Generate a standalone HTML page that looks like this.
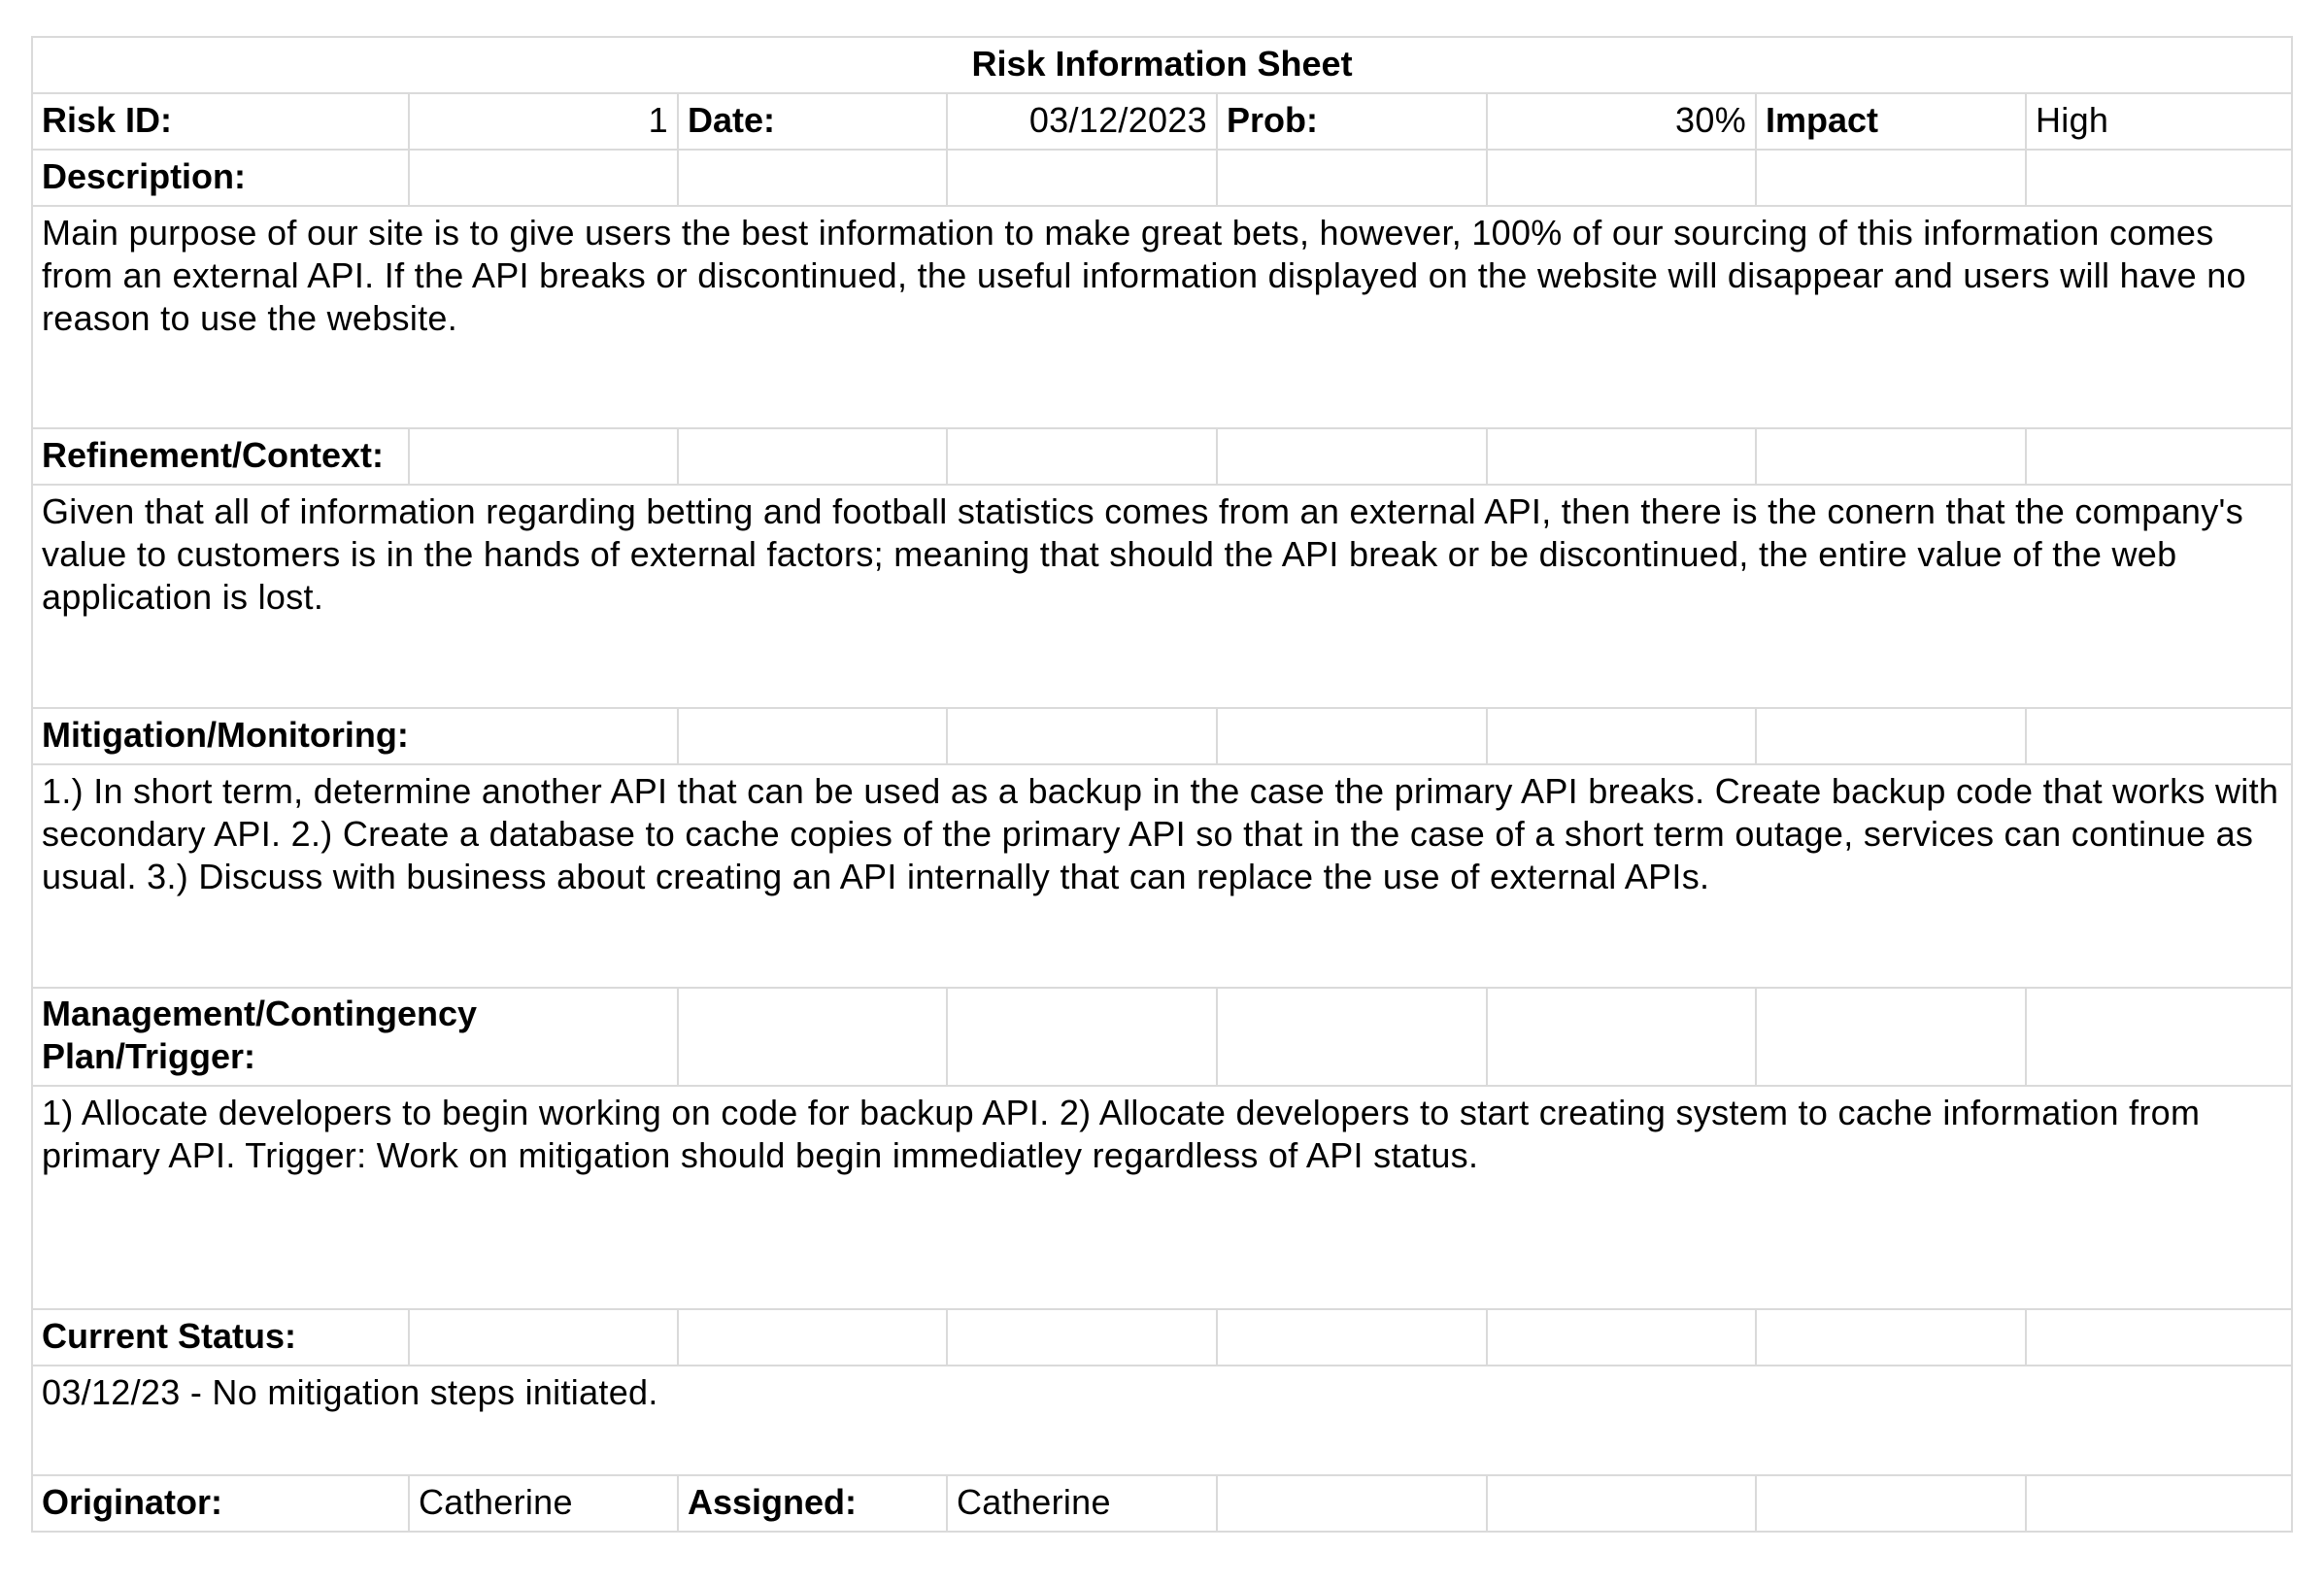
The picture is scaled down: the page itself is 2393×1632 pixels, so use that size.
<!DOCTYPE html>
<html><head><meta charset="utf-8"><style>
html,body{margin:0;padding:0;background:#fff;width:2393px;height:1632px;overflow:hidden}
table{position:absolute;left:32px;top:37px;width:2327px;border-collapse:collapse;table-layout:fixed;font-family:"Liberation Sans",Arial,sans-serif;font-size:36px;color:#000;letter-spacing:0.3px}
td{border:2px solid #dadada;padding:0 9px 7px 9px;line-height:44px;white-space:nowrap;overflow:visible;vertical-align:bottom}
td.b{font-weight:bold;letter-spacing:0}
td.r{text-align:right}
td.w{vertical-align:top;padding-top:5px;padding-bottom:0}
</style></head><body>
<table>
<colgroup><col style="width:388px"><col style="width:277px"><col style="width:277px"><col style="width:278px"><col style="width:278px"><col style="width:277px"><col style="width:278px"><col style="width:274px"></colgroup>
<tr style="height:58px"><td colspan="8" class="b" style="text-align:center">Risk Information Sheet</td></tr>
<tr style="height:58px"><td class="b">Risk ID:</td><td class="r">1</td><td class="b">Date:</td><td class="r">03/12/2023</td><td class="b">Prob:</td><td class="r">30%</td><td class="b">Impact</td><td>High</td></tr>
<tr style="height:58px"><td class="b">Description:</td><td></td><td></td><td></td><td></td><td></td><td></td><td></td></tr>
<tr style="height:229px"><td colspan="8" class="w">Main purpose of our site is to give users the best information to make great bets, however, 100% of our sourcing of this information comes<br>from an external API. If the API breaks or discontinued, the useful information displayed on the website will disappear and users will have no<br>reason to use the website.</td></tr>
<tr style="height:58px"><td class="b">Refinement/Context:</td><td></td><td></td><td></td><td></td><td></td><td></td><td></td></tr>
<tr style="height:230px"><td colspan="8" class="w">Given that all of information regarding betting and football statistics comes from an external API, then there is the conern that the company's<br>value to customers is in the hands of external factors; meaning that should the API break or be discontinued, the entire value of the web<br>application is lost.</td></tr>
<tr style="height:58px"><td colspan="2" class="b">Mitigation/Monitoring:</td><td></td><td></td><td></td><td></td><td></td><td></td></tr>
<tr style="height:230px"><td colspan="8" class="w">1.) In short term, determine another API that can be used as a backup in the case the primary API breaks. Create backup code that works with<br>secondary API. 2.) Create a database to cache copies of the primary API so that in the case of a short term outage, services can continue as<br>usual. 3.) Discuss with business about creating an API internally that can replace the use of external APIs.</td></tr>
<tr style="height:101px"><td colspan="2" class="b">Management/Contingency<br>Plan/Trigger:</td><td></td><td></td><td></td><td></td><td></td><td></td></tr>
<tr style="height:230px"><td colspan="8" class="w">1) Allocate developers to begin working on code for backup API. 2) Allocate developers to start creating system to cache information from<br>primary API. Trigger: Work on mitigation should begin immediatley regardless of API status.</td></tr>
<tr style="height:58px"><td class="b">Current Status:</td><td></td><td></td><td></td><td></td><td></td><td></td><td></td></tr>
<tr style="height:113px"><td colspan="8" class="w">03/12/23 - No mitigation steps initiated.</td></tr>
<tr style="height:58px"><td class="b">Originator:</td><td>Catherine</td><td class="b">Assigned:</td><td>Catherine</td><td></td><td></td><td></td><td></td></tr>
</table>
</body></html>
